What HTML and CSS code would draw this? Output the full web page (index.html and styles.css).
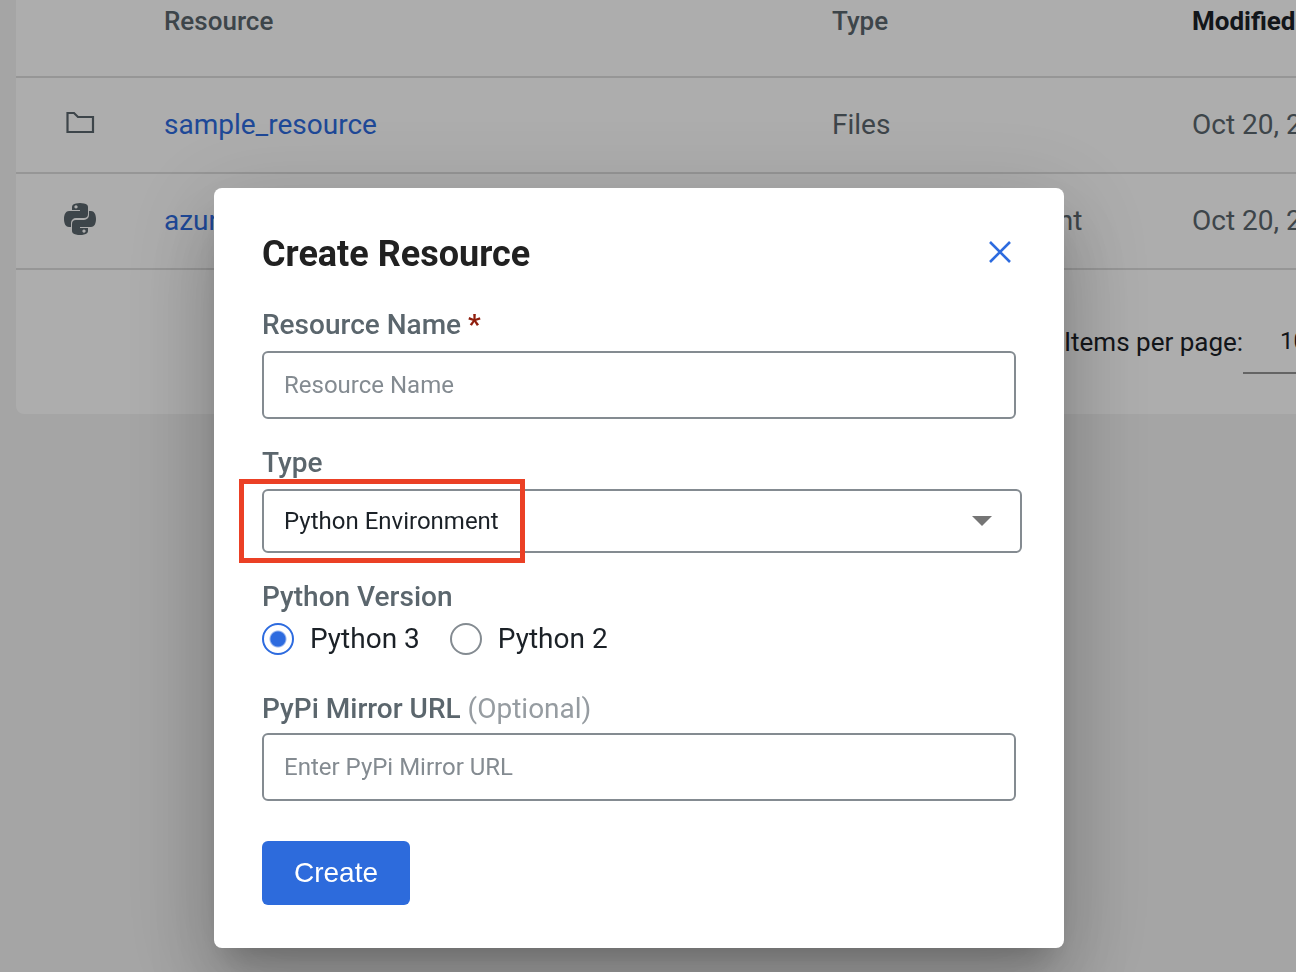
FILE: index.html
```html
<!DOCTYPE html>
<html lang="en">
<head>
<meta charset="utf-8">
<title>Create Resource</title>
<link rel="stylesheet" href="styles.css">
</head>
<body>
<main class="card">
  <table class="resources">
    <colgroup><col class="col-icon"><col class="col-name"><col class="col-type"><col></colgroup>
    <thead>
      <tr><th></th><th>Resource</th><th>Type</th><th class="sorted">Modified</th></tr>
    </thead>
    <tbody>
      <tr>
        <td class="icon-cell"><svg class="icon" viewBox="0 0 32 32"><path d="M3.500 6h6.500l4 4h15v15H3.500z" fill="none" stroke="currentColor" stroke-width="2.200"/></svg></td>
        <td><a href="#">sample_resource</a></td><td>Files</td><td>Oct 20, 2021</td>
      </tr>
      <tr>
        <td class="icon-cell"><svg class="icon" viewBox="0 0 32 32" fill="currentColor" fill-rule="evenodd"><path id="snake" d="M12 0.500Q16-.5 20 .5Q24 1.200 24 4v7a4 4 0 0 1-4 4h-8a5 5 0 0 0-5 5v4H5c-3 0-5-3-5-8s2-8 5-8h11V7H8V4Q8 1.200 12 .5zM12 2.300a1.600 1.600 0 1 0 .01 0z"/><use href="#snake" transform="rotate(180 16 16)"/></svg></td>
        <td><a href="#">azure_env</a></td><td>Python Environment</td><td>Oct 20, 2021</td>
      </tr>
    </tbody>
  </table>
  <div class="paginator">
    <label for="page-size">Items per page:</label>
    <select id="page-size" class="page-size"><option>10</option></select>
  </div>
</main>
<div class="backdrop">
  <form class="dialog" role="dialog" aria-modal="true" aria-labelledby="dialog-title">
    <header class="dialog-header">
      <h1 id="dialog-title">Create Resource</h1>
      <button type="button" class="close" aria-label="Close"><svg viewBox="0 0 32 32"><path d="M6 6l20 20M26 6L6 26" stroke="currentColor" stroke-width="2.600"/></svg></button>
    </header>
    <div class="field">
      <label class="label" for="name">Resource Name <span class="required">*</span></label>
      <input class="input" id="name" type="text" placeholder="Resource Name">
    </div>
    <div class="field">
      <label class="label" for="type">Type</label>
      <div class="select-wrap">
        <select class="select" id="type"><option>Python Environment</option></select>
        <svg class="arrow" viewBox="0 0 20 10"><path d="M0 0h20L10 10z" fill="currentColor"/></svg>
        <span class="highlight"></span>
      </div>
    </div>
    <fieldset class="field versions">
      <legend class="label">Python Version</legend>
      <div class="radios">
        <label class="radio"><input type="radio" name="version" checked>Python 3</label>
        <label class="radio"><input type="radio" name="version">Python 2</label>
      </div>
    </fieldset>
    <div class="field mirror">
      <label class="label" for="mirror">PyPi Mirror URL <span class="optional">(Optional)</span></label>
      <input class="input" id="mirror" type="text" placeholder="Enter PyPi Mirror URL">
    </div>
    <button type="button" class="create">Create</button>
  </form>
</div>
</body>
</html>
```
FILE: styles.css
```css
* { box-sizing: border-box; }
body {
  margin: 0;
  min-height: 100vh;
  overflow: hidden;
  background: #f3f3f3;
  color: #1b2127;
  font: 28px/32px Roboto, sans-serif;
}
a { color: #2d6bdf; text-decoration: none; }

.card {
  margin-left: 16px;
  background: #fff;
  border-radius: 0 0 0 8px;
}
.resources {
  width: 100%;
  table-layout: fixed;
  border-collapse: separate;
  border-spacing: 0;
  color: #5b666d;
}
.col-icon { width: 148px; }
.col-name { width: 668px; }
.col-type { width: 360px; }
.resources th,
.resources td {
  padding: 0;
  border-bottom: 2px solid #dedede;
  text-align: left;
  white-space: nowrap;
}
.resources th {
  height: 78px;
  padding-top: 5px;
  vertical-align: top;
  font-size: 26px;
  font-weight: 500;
}
.resources th.sorted { color: #1b2127; font-weight: 700; }
.resources td { height: 96px; }
.resources .icon-cell { padding: 0 0 4px 48px; }
.icon { display: block; width: 32px; height: 32px; }

.paginator {
  display: flex;
  align-items: center;
  height: 144px;
  padding-left: 1048px;
  font-size: 26px;
  white-space: nowrap;
  overflow: hidden;
}
.page-size {
  appearance: none;
  flex: none;
  width: 112px;
  height: 64px;
  padding: 0 0 0 37px;
  border: 0;
  border-bottom: 2px solid #949494;
  background: none;
  color: inherit;
  font: 24px/32px Roboto, sans-serif;
}

.backdrop {
  position: fixed;
  inset: 0;
  display: flex;
  justify-content: center;
  align-items: flex-start;
  padding: 188px 18px 24px 0;
  background: rgba(0, 0, 0, .32);
}
.dialog {
  width: 850px;
  padding: 48px 48px 43px;
  background: #fff;
  border-radius: 8px;
  box-shadow: 0 22px 30px -14px rgba(0, 0, 0, .2),
    0 48px 76px 6px rgba(0, 0, 0, .14),
    0 18px 92px 16px rgba(0, 0, 0, .12);
}
.dialog-header {
  display: flex;
  justify-content: space-between;
  align-items: flex-start;
  margin-bottom: 37px;
}
.dialog-header h1 {
  margin: 0;
  color: #212121;
  font-size: 36px;
  font-weight: 700;
  line-height: 36px;
}
.close {
  width: 32px;
  height: 32px;
  padding: 0;
  border: 0;
  background: none;
  color: #2d6bdf;
}
.close svg { display: block; }

.field { margin: 0 0 28px; }
.label {
  display: block;
  margin-bottom: 10px;
  padding: 0;
  color: #5b666d;
  font-weight: 500;
}
.required { color: #8f1d0c; font-weight: 700; }
.optional { color: #969ca1; font-weight: 400; }
.input,
.select {
  display: block;
  width: 754px;
  max-width: 100%;
  padding: 0 20px;
  border: 2px solid #848b91;
  border-radius: 6px;
  background: #fff;
  color: #1b2127;
  font: 24px/32px Roboto, sans-serif;
}
.input { height: 68px; }
.input::placeholder { color: #848b91; opacity: 1; }
.select-wrap { position: relative; margin-right: -6px; }
.select { appearance: none; width: 100%; height: 64px; }
.arrow {
  position: absolute;
  top: 27px;
  right: 30px;
  width: 20px;
  height: 10px;
  color: #757575;
  pointer-events: none;
}
.highlight {
  position: absolute;
  top: -10px;
  left: -23px;
  width: 286px;
  height: 84px;
  border: 5px solid #eb4025;
  pointer-events: none;
}
.versions { min-width: 0; margin-bottom: 38px; padding: 0; border: 0; }
.mirror { margin-bottom: 40px; }
.mirror .label { margin-bottom: 8px; }
.radios { display: flex; gap: 30px; }
.radio { display: flex; align-items: center; gap: 16px; }
.radio input {
  appearance: none;
  width: 32px;
  height: 32px;
  margin: 0;
  border: 2px solid #848b91;
  border-radius: 50%;
  background: #fff;
}
.radio input:checked {
  border-color: #2d6bdf;
  background: radial-gradient(circle, #2d6bdf 7px, #fff 9px);
}
.create {
  display: block;
  height: 64px;
  padding: 0 32px;
  border: 0;
  border-radius: 6px;
  background: #2d6bdc;
  color: #fff;
  font: 28px/32px "Liberation Sans", Arial, sans-serif;
}
```
